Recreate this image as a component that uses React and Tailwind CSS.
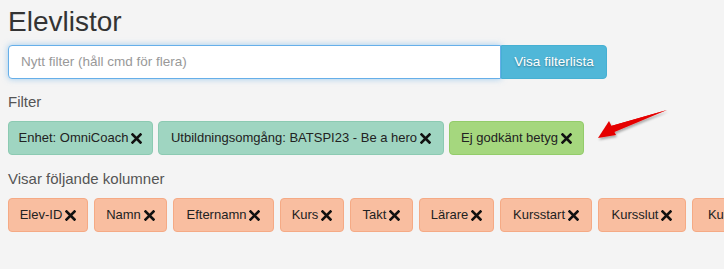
import React from 'react';

const font = { fontFamily: '"Liberation Sans", Arial, sans-serif' };

const filters = [
  { label: 'Enhet: OmniCoach', w: 'w-[145px]', cls: 'bg-[#9fd5c1] border-[#8ccab2]' },
  { label: 'Utbildningsomgång: BATSPI23 - Be a hero', w: 'w-[286px]', cls: 'bg-[#9fd5c1] border-[#8ccab2]' },
  { label: 'Ej godkänt betyg', w: 'w-[135px]', cls: 'bg-[#a5d77e] border-[#93cc6a]' },
];

const columns = [
  { label: 'Elev-ID', w: 'w-[80px]' },
  { label: 'Namn', w: 'w-[73px]' },
  { label: 'Efternamn', w: 'w-[101px]' },
  { label: 'Kurs', w: 'w-[64px]' },
  { label: 'Takt', w: 'w-[63px]' },
  { label: 'Lärare', w: 'w-[75px]' },
  { label: 'Kursstart', w: 'w-[92px]' },
  { label: 'Kursslut', w: 'w-[88px]' },
  { label: 'Kurstyp', w: 'w-[90px]' },
];

const Cross = () => (
  <svg width="11" height="11" viewBox="0 0 11 11" className="ml-[3px] shrink-0">
    <path d="M1.5 1.5 L9.5 9.5 M9.5 1.5 L1.5 9.5" stroke="#111" strokeWidth="2.6" strokeLinecap="square" />
  </svg>
);

const Chip = ({ label, w, cls }) => (
  <div className={`${w} shrink-0 h-[34px] flex items-center justify-center rounded-[4px] border text-[13px] text-[#222] whitespace-nowrap ${cls}`}>
    <span>{label}</span>
    <Cross />
  </div>
);

export default function App() {
  return (
    <div className="w-[724px] h-[269px] bg-[#f4f4f4] overflow-hidden relative px-2" style={font}>
      <h1 className="text-[28px] leading-none text-[#333] pt-[8px]">Elevlistor</h1>

      <div className="flex mt-[9px]">
        <div className="w-[493px] h-[34px] bg-white border border-[#66afe9] rounded-l-[4px] shadow-[0_0_6px_rgba(102,175,233,0.6)] flex items-center px-3">
          <span className="text-[13.5px] text-[#999]">Nytt filter (håll cmd för flera)</span>
        </div>
        <button className="w-[106px] h-[34px] bg-[#50b7d8] border border-[#46b0d3] rounded-r-[4px] text-white text-[13.5px] [text-shadow:0_1px_2px_rgba(0,0,0,0.35)]">
          Visa filterlista
        </button>
      </div>

      <div className="mt-[12px] text-[15px] leading-[22px] text-[#555]">Filter</div>
      <div className="flex gap-[5px] mt-[8px]">
        {filters.map((f) => (
          <Chip key={f.label} {...f} />
        ))}
      </div>

      <div className="mt-[13px] text-[15px] leading-[22px] text-[#555]">Visar följande kolumner</div>
      <div className="flex gap-[6px] mt-[8px]">
        {columns.map((c) => (
          <Chip key={c.label} {...c} cls="bg-[#f9bea0] border-[#f5aa85]" />
        ))}
      </div>

      <svg className="absolute left-[590px] top-[104px]" width="84" height="42" viewBox="0 0 84 42">
        <defs>
          <filter id="sh" x="-20%" y="-20%" width="140%" height="160%">
            <feDropShadow dx="1" dy="2" stdDeviation="1" floodColor="#000" floodOpacity="0.3" />
          </filter>
        </defs>
        <g filter="url(#sh)">
          <path d="M77 6 L20 26 L21 22 Z" fill="#e50000" />
          <path d="M77 6 L22 29 L21 22 Z" fill="#e50000" />
          <path d="M8 34 L19 17 L26 31 Z" fill="#e50000" />
        </g>
      </svg>
    </div>
  );
}
